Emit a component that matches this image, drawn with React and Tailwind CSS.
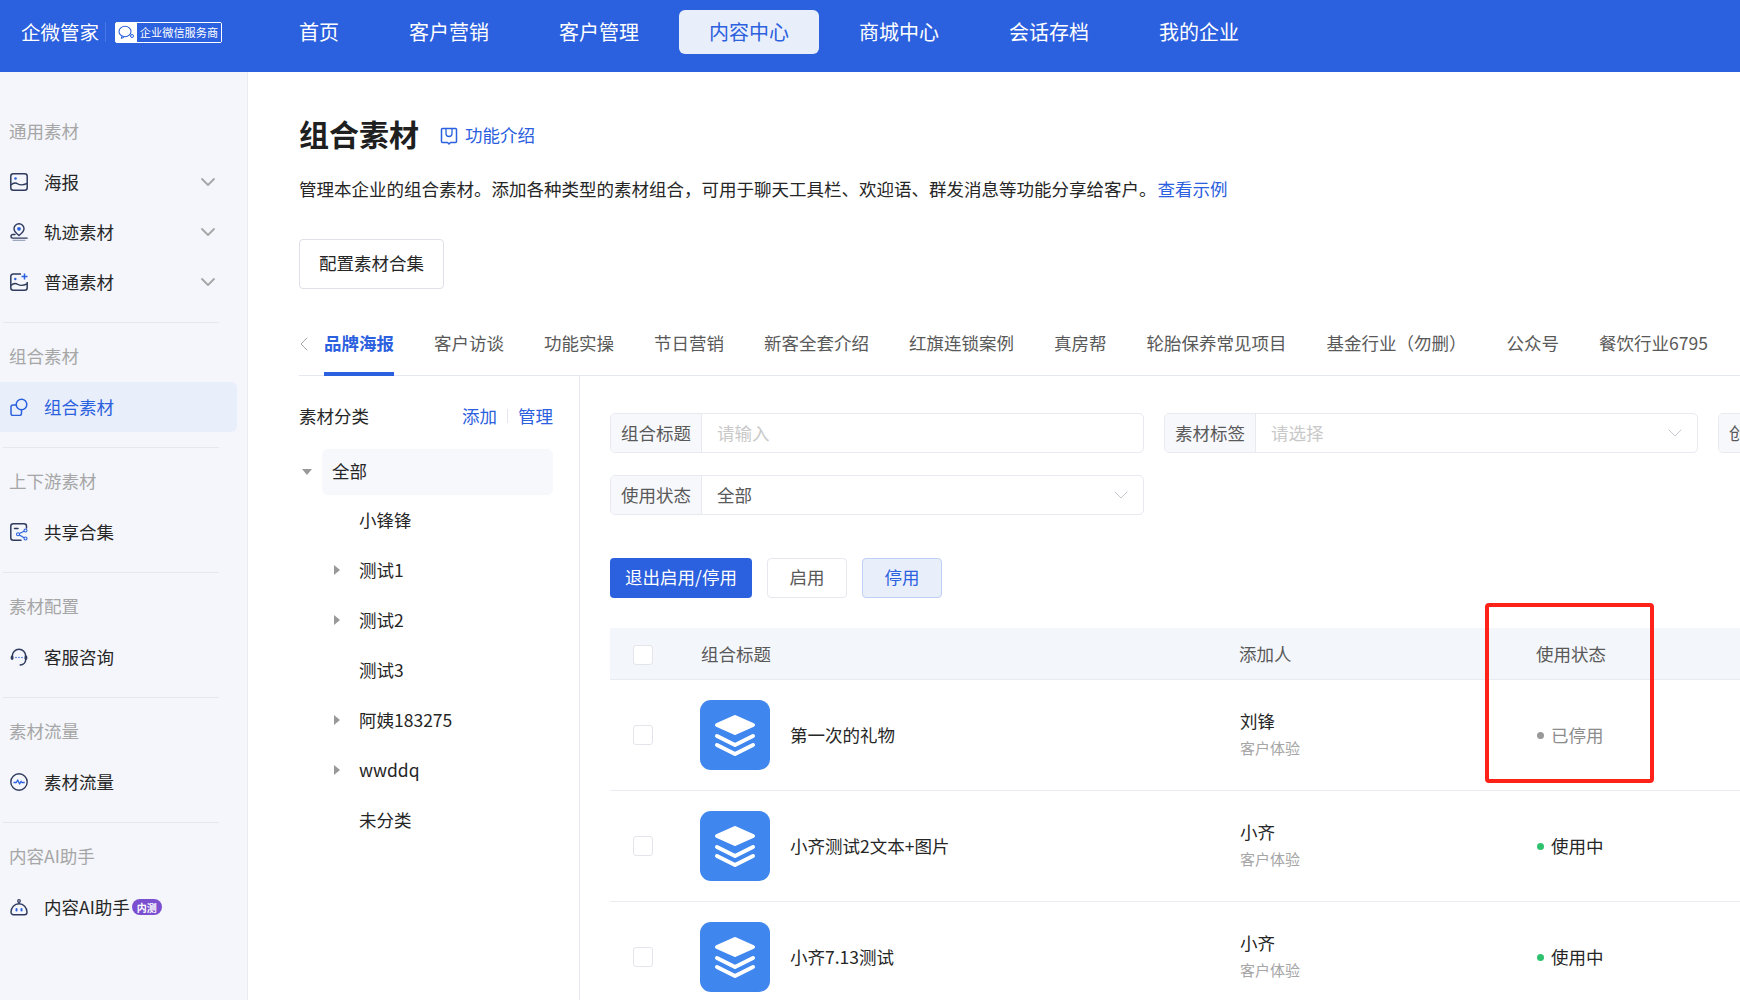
import { ChevronDown, ChevronLeft } from "lucide-react";

const navItems = ["首页", "客户营销", "客户管理", "内容中心", "商城中心", "会话存档", "我的企业"];
const tabs = ["品牌海报", "客户访谈", "功能实操", "节日营销", "新客全套介绍", "红旗连锁案例", "真房帮", "轮胎保养常见项目", "基金行业（勿删）", "公众号", "餐饮行业6795"];

const DARK = "#2f3b5e";
const BLUE = "#2b60de";

const PosterIcon = () => (
  <svg width="18" height="18" viewBox="0 0 18 18" fill="none">
    <rect x="0.8" y="0.8" width="16.4" height="16.4" rx="2.5" stroke={DARK} strokeWidth="1.5" />
    <path d="M1 12c2.500-2.500 4.500-2.500 7-1s4.500 1.500 9-.5" stroke={DARK} strokeWidth="1.4" />
    <circle cx="5.500" cy="5.500" r="1.300" fill={BLUE} />
  </svg>
);

const TrackIcon = () => (
  <svg width="18" height="18" viewBox="0 0 18 18" fill="none">
    <path d="M9 12.500c-3-2.300-5-4.200-5-6.700a5 5 0 0 1 10 0c0 2.500-2 4.400-5 6.700z" stroke={DARK} strokeWidth="1.4" />
    <circle cx="9" cy="5.800" r="1.900" fill={BLUE} />
    <path d="M5 11.500H2.800a1.800 1.800 0 0 0 0 3.600h14.400" stroke={DARK} strokeWidth="1.400" strokeLinecap="round" />
    <path d="M3 17.300h12" stroke="#8a96b5" strokeWidth="1" strokeLinecap="round" />
  </svg>
);

const MaterialIcon = () => (
  <svg width="18" height="18" viewBox="0 0 18 18" fill="none">
    <path d="M11 .9H3.300A2.500 2.500 0 0 0 .8 3.400v11.300a2.500 2.500 0 0 0 2.500 2.500h11.400a2.500 2.500 0 0 0 2.500-2.500V9" stroke={DARK} strokeWidth="1.500" />
    <path d="M1 12.500c2.500-2.500 4.500-2.500 7-1s4.500 1.500 9-.5" stroke={DARK} strokeWidth="1.400" />
    <circle cx="5.300" cy="6" r="1.200" fill={BLUE} />
    <path d="M14.500 .5v6M11.500 3.500h6" stroke={BLUE} strokeWidth="1.500" />
  </svg>
);

const ComboIcon = () => (
  <svg width="18" height="18" viewBox="0 0 18 18" fill="none">
    <path d="M6 7H3a2 2 0 0 0-2 2v6.500a2 2 0 0 0 2 2h6.500a2 2 0 0 0 2-2V12" stroke={BLUE} strokeWidth="1.500" />
    <circle cx="11.500" cy="6.500" r="5.300" stroke={BLUE} strokeWidth="1.500" />
  </svg>
);

const ShareIcon = () => (
  <svg width="18" height="18" viewBox="0 0 18 18" fill="none">
    <path d="M16.500 5V3.300A2.500 2.500 0 0 0 14 .8H3.300A2.500 2.500 0 0 0 .8 3.300v11.400a2.500 2.500 0 0 0 2.500 2.500h7.700" stroke={DARK} strokeWidth="1.500" strokeLinecap="round" />
    <path d="M4.500 5.500h3.500" stroke={DARK} strokeWidth="1.500" strokeLinecap="round" />
    <path d="M15.500 7.500L8 11.300l7.500 4.200" stroke={BLUE} strokeWidth="1.200" />
    <circle cx="15.500" cy="7.500" r="1.500" fill="#f4f6fb" stroke={BLUE} strokeWidth="1.100" />
    <circle cx="8" cy="11.300" r="1.500" fill="#f4f6fb" stroke={BLUE} strokeWidth="1.100" />
    <circle cx="15.500" cy="15.500" r="1.500" fill="#f4f6fb" stroke={BLUE} strokeWidth="1.100" />
  </svg>
);

const ServiceIcon = () => (
  <svg width="18" height="18" viewBox="0 0 18 18" fill="none">
    <path d="M2.300 8a6.700 6.700 0 0 1 13.400 0" stroke={DARK} strokeWidth="1.500" />
    <path d="M15.700 11.500c0 2.800-2.200 5.300-5.500 5.500" stroke={DARK} strokeWidth="1.500" strokeLinecap="round" />
    <rect x="0.700" y="7.500" width="2.800" height="4.500" rx="1.400" fill={DARK} />
    <rect x="14.500" y="7.500" width="2.800" height="4.500" rx="1.400" fill={DARK} />
    <path d="M6 9.500h.01M9 9.500h.01M12 9.500h.01" stroke={BLUE} strokeWidth="1.500" strokeLinecap="round" />
  </svg>
);

const FlowIcon = () => (
  <svg width="18" height="18" viewBox="0 0 18 18" fill="none">
    <circle cx="9" cy="9" r="8.200" stroke={DARK} strokeWidth="1.400" />
    <path d="M3.500 9.500h2.800l1.400-2.500 1.900 4 1.500-2.700.8 1.200h2.800" stroke={BLUE} strokeWidth="1.300" strokeLinejoin="round" />
  </svg>
);

const RobotIcon = () => (
  <svg width="18" height="18" viewBox="0 0 18 18" fill="none">
    <path d="M3.500 16.800h11a2.500 2.500 0 0 0 2.500-2.500c0-5-3.500-8.500-8-8.500s-8 3.500-8 8.500a2.500 2.500 0 0 0 2.500 2.500z" stroke={DARK} strokeWidth="1.400" />
    <circle cx="9" cy="3" r="1.300" stroke={DARK} strokeWidth="1.200" />
    <path d="M9 4.300v1.500" stroke={DARK} strokeWidth="1.200" />
    <rect x="5.500" y="10" width="2" height="3.500" rx="1" fill={BLUE} />
    <rect x="10.500" y="10" width="2" height="3.500" rx="1" fill={BLUE} />
  </svg>
);

const BookIcon = () => (
  <svg width="18" height="18" viewBox="0 0 18 18" fill="none">
    <path d="M2.500 1.500h13a1 1 0 0 1 1 1v12a1 1 0 0 1-1 1h-5L9 17l-1.500-1.500h-5a1 1 0 0 1-1-1v-12a1 1 0 0 1 1-1z" stroke={BLUE} strokeWidth="1.500" strokeLinejoin="round" />
    <path d="M6 2v4.500a3 3 0 0 0 6 0V2" stroke={BLUE} strokeWidth="1.300" />
  </svg>
);

const ChatMark = () => (
  <svg width="17" height="15" viewBox="0 0 17 15" fill="none">
    <ellipse cx="7" cy="6.500" rx="6" ry="5.200" stroke="#2b60de" strokeWidth="1.100" />
    <path d="M3.800 11.200l-.4 2.300 2.600-1.400" stroke="#2b60de" strokeWidth="1" />
    <circle cx="14" cy="11" r="1.500" stroke="#2b60de" strokeWidth="1" />
  </svg>
);

const LayersIcon = () => (
  <div className="w-[70px] h-[70px] rounded-[11px] bg-[#3f86ee] flex items-center justify-center shrink-0">
    <svg width="70" height="70" viewBox="0 0 70 70" fill="none">
      <path d="M35 17l18 8-18 8-18-8z" fill="#fff" stroke="#fff" strokeWidth="4" strokeLinejoin="round" />
      <path d="M17 36l18 9 18-9" stroke="#fff" strokeWidth="4" strokeLinecap="round" strokeLinejoin="round" />
      <path d="M17 45l18 9 18-9" stroke="#fff" strokeWidth="4" strokeLinecap="round" strokeLinejoin="round" />
    </svg>
  </div>
);

const sideGroups = [
  { label: "通用素材", items: [
    { name: "海报", icon: <PosterIcon />, arrow: true },
    { name: "轨迹素材", icon: <TrackIcon />, arrow: true },
    { name: "普通素材", icon: <MaterialIcon />, arrow: true },
  ] },
  { label: "组合素材", items: [{ name: "组合素材", icon: <ComboIcon />, active: true }] },
  { label: "上下游素材", items: [{ name: "共享合集", icon: <ShareIcon /> }] },
  { label: "素材配置", items: [{ name: "客服咨询", icon: <ServiceIcon /> }] },
  { label: "素材流量", items: [{ name: "素材流量", icon: <FlowIcon /> }] },
  { label: "内容AI助手", items: [{ name: "内容AI助手", icon: <RobotIcon />, beta: true }] },
];

const treeItems = [
  { name: "小锋锋" },
  { name: "测试1", arrow: true },
  { name: "测试2", arrow: true },
  { name: "测试3" },
  { name: "阿姨183275", arrow: true },
  { name: "wwddq", arrow: true },
  { name: "未分类" },
];

const rows = [
  { title: "第一次的礼物", user: "刘锋", on: false },
  { title: "小齐测试2文本+图片", user: "小齐", on: true },
  { title: "小齐7.13测试", user: "小齐", on: true },
];

const Sidebar = () => (
  <aside className="w-[248px] shrink-0 bg-[#f4f6fb] border-r border-[#e9ebf2] pt-[35px]">
    {sideGroups.map((group, i) => (
      <div key={group.label}>
        {i > 0 && <div className="ml-[3px] w-[216px] h-px bg-[#e6e8ef] mt-[15px] mb-[9px]" />}
        <div className="h-[50px] pl-[9px] pb-[2px] flex items-center text-[17.5px] text-[#a6a6a6]">{group.label}</div>
        {group.items.map((item) => (
          <div
            key={item.name}
            className={`h-[50px] w-[237px] pl-[10px] pr-[17px] flex items-center rounded-r-md text-[17.5px] ${
              item.active ? "bg-[#e8effb] text-[#2b60de]" : "text-[#262626]"
            }`}
          >
            <span className="w-[34px] shrink-0 flex">{item.icon}</span>
            <span>{item.name}</span>
            {item.beta && (
              <span className="ml-[2px] w-[30px] h-[16px] rounded-full bg-[#7a4fd0] text-white text-[10px] font-bold flex items-center justify-center">
                内测
              </span>
            )}
            {item.arrow && <ChevronDown className="ml-auto text-[#a6a6a6]" size={24} strokeWidth={1.8} />}
          </div>
        ))}
      </div>
    ))}
  </aside>
);

const Field = ({ label, placeholder, value, select }) => (
  <div className="h-[40px] flex border border-[#e8eaf0] rounded-[5px] overflow-hidden text-[17.5px]">
    <div className="w-[91px] shrink-0 bg-[#f7f8fc] border-r border-[#e8eaf0] flex items-center justify-center text-[#595959]">
      {label}
    </div>
    <div className="flex-1 flex items-center pl-[15px] pr-[10px]">
      <span className={value ? "text-[#595959]" : "text-[#c9c9c9]"}>{value || placeholder}</span>
      {select && <ChevronDown className="ml-auto text-[#c4c7cf]" size={24} strokeWidth={1} />}
    </div>
  </div>
);

const Checkbox = () => <span className="block w-[20px] h-[20px] bg-white border border-[#e3e5ea] rounded-[3px]" />;

export default function App() {
  return (
    <div className="relative w-full h-screen overflow-hidden flex flex-col bg-white font-['Noto_Sans_CJK_SC','Noto_Sans',sans-serif]">
      {/* header */}
      <header className="h-[72px] shrink-0 bg-[#2b60de] flex items-start pt-[10px] text-white">
        <div className="h-[44px] flex items-center pl-[21px] w-[269px] shrink-0">
          <span className="text-[19.5px]">企微管家</span>
          <span className="w-px h-[20px] bg-[#4a78e4] ml-[6px] mr-[9px]" />
          <span className="w-[107px] h-[21px] bg-white border border-white rounded-[2px] flex items-center">
            <span className="w-[21px] flex justify-center"><ChatMark /></span>
            <span className="flex-1 h-full bg-[#2b60de] text-[11.2px] flex items-center justify-center whitespace-nowrap">企业微信服务商</span>
          </span>
        </div>
        <nav className="flex gap-[10px]">
          {navItems.map((item, i) => (
            <a
              key={item}
              className={`h-[44px] px-[30px] flex items-center justify-center rounded-md text-[20px] ${
                item === "内容中心" ? "bg-[#e8effb] text-[#2b60de]" : ""
              } ${i === 0 ? "w-[100px]" : ""}`}
            >
              {item}
            </a>
          ))}
        </nav>
      </header>

      <div className="flex-1 flex min-h-0">
        <Sidebar />
        <main className="flex-1 min-w-0 overflow-hidden pt-[43px] pl-[51px] text-[17.5px] text-[#262626]">
          <div className="h-[40px] flex items-center">
            <h1 className="text-[30px] pb-[3px] font-bold text-[#1f1f1f] whitespace-nowrap">组合素材</h1>
            <a className="ml-[21px] pt-[1px] flex items-center gap-[7px] text-[#2b60de]">
              <BookIcon />
              功能介绍
            </a>
          </div>
          <p className="mt-[21px] h-[26px] flex items-center whitespace-nowrap">
            管理本企业的组合素材。添加各种类型的素材组合，可用于聊天工具栏、欢迎语、群发消息等功能分享给客户。
            <a className="ml-px text-[#2b60de]">查看示例</a>
          </p>
          <button className="mt-[37px] w-[145px] h-[50px] pb-[2px] border border-[#dfe1e6] rounded-[4px] bg-white text-[#262626]">
            配置素材合集
          </button>

          {/* tabs */}
          <div className="mt-[23px] h-[64px] border-b border-[#e6e8f0] flex items-center whitespace-nowrap">
            <ChevronLeft className="ml-[-7px] mr-[8px] text-[#a6a6a6]" size={24} strokeWidth={1} />
            <div className="flex gap-[40px] text-[#595959]">
              {tabs.map((tab, i) => (
                <div
                  key={tab}
                  className={`h-[64px] pb-[2px] -mb-px flex items-center border-y-4 border-t-transparent ${
                    i === 0 ? "border-b-[#2b60de] text-[#2b60de] font-semibold" : "border-b-transparent"
                  }`}
                >
                  {tab}
                </div>
              ))}
            </div>
          </div>

          <div className="flex h-full">
            {/* category tree */}
            <div className="w-[281px] shrink-0 border-r border-[#e6e8f0] pr-[26px] pt-[25px]">
              <div className="h-[30px] flex items-center justify-between">
                <span>素材分类</span>
                <span className="flex items-center text-[#2b60de]">
                  添加
                  <span className="w-px h-[14px] bg-[#e6e8f0] mx-[10px]" />
                  管理
                </span>
              </div>
              <div className="mt-[17px]">
                <div className="h-[47px] flex items-center">
                  <span className="w-[23px] pr-[7px] flex justify-center">
                    <span className="w-0 h-0 border-x-[5px] border-x-transparent border-t-[6px] border-t-[#999]" />
                  </span>
                  <span className="flex-1 h-[46px] bg-[#f7f8fc] rounded-md pl-[10px] flex items-center">全部</span>
                </div>
                {treeItems.map((item) => (
                  <div key={item.name} className="h-[50px] flex items-center pl-[35px]">
                    <span className="w-[25px] flex">
                      {item.arrow && <span className="w-0 h-0 border-y-[5px] border-y-transparent border-l-[6px] border-l-[#999]" />}
                    </span>
                    {item.name}
                  </div>
                ))}
              </div>
            </div>

            {/* right panel */}
            <div className="pl-[30px] pt-[37px]">
              <div className="grid grid-cols-[534px_534px_534px] gap-x-[20px] gap-y-[22px]">
                <Field label="组合标题" placeholder="请输入" />
                <Field label="素材标签" placeholder="请选择" select />
                <Field label="创建时间" placeholder="请选择" />
                <Field label="使用状态" value="全部" select />
              </div>

              <div className="mt-[43px] flex gap-[15px]">
                <button className="w-[142px] h-[40px] pb-[2px] rounded-[4px] bg-[#2b60de] text-white">退出启用/停用</button>
                <button className="w-[80px] h-[40px] pb-[2px] rounded-[4px] border border-[#e6e8ee] text-[#595959]">启用</button>
                <button className="w-[80px] h-[40px] pb-[2px] rounded-[4px] border border-[#bfcff5] bg-[#e8effb] text-[#2b60de]">停用</button>
              </div>

              <div className="mt-[30px] w-[1300px]">
                <div className="h-[52px] pt-[2px] bg-[#f3f6fa] border-b border-[#e8ebf2] flex items-center text-[#595959]">
                  <span className="w-[91px] pl-[23px]"><Checkbox /></span>
                  <span className="w-[538px]">组合标题</span>
                  <span className="w-[297px]">添加人</span>
                  <span>使用状态</span>
                </div>
                {rows.map((row) => (
                  <div key={row.title} className="h-[111px] border-b border-[#ebedf3] flex items-center">
                    <span className="w-[90px] pl-[23px]"><Checkbox /></span>
                    <div className="w-[540px] flex items-center gap-[20px]">
                      <LayersIcon />
                      <span>{row.title}</span>
                    </div>
                    <div className="w-[297px] pb-[4px]">
                      <div className="leading-[26px]">{row.user}</div>
                      <div className="text-[15px] leading-[22px] mt-[3px] text-[#a6a6a6]">客户体验</div>
                    </div>
                    <div className={`flex items-center gap-[7px] ${row.on ? "text-[#262626]" : "text-[#8c8c8c]"}`}>
                      <span className={`w-[7px] h-[7px] rounded-full ${row.on ? "bg-[#2fc26e]" : "bg-[#999]"}`} />
                      {row.on ? "使用中" : "已停用"}
                    </div>
                  </div>
                ))}
              </div>
            </div>
          </div>
        </main>
      </div>

      {/* red annotation box */}
      <div className="absolute left-[1485px] top-[603px] w-[169px] h-[180px] border-[4px] border-[#ff2219] rounded-[4px]" />
    </div>
  );
}
